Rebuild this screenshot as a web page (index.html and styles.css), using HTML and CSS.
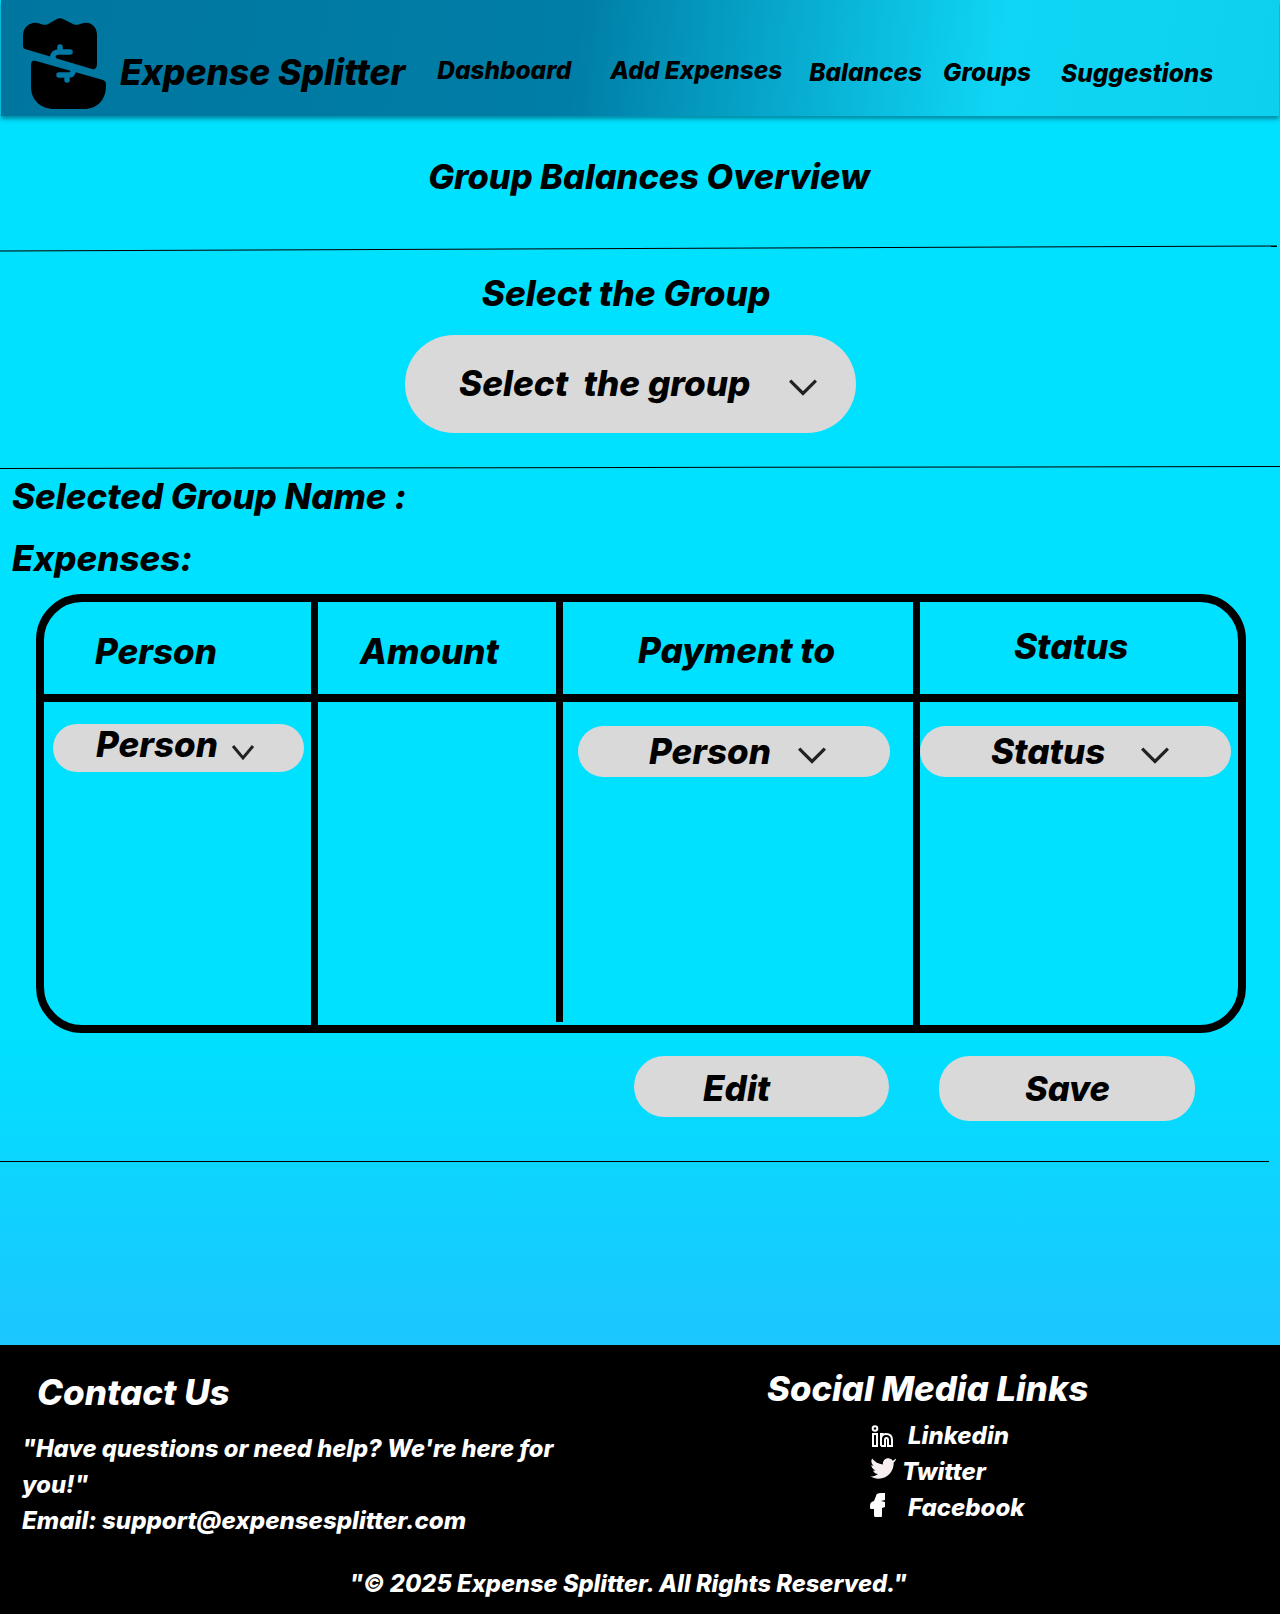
FILE: index.html
```html
<!DOCTYPE html>
<html lang="en">

<head>
    <title>Expense Splitter - Balances</title>
    <meta charset="UTF-8">
    <meta name="viewport" content="width=device-width, initial-scale=1">
    <link rel="stylesheet" href="styles.css">
</head>

<body>
    <header class="topbar">
        <svg class="logo" viewBox="0 0 110 116" aria-hidden="true">
            <path fill="#000" d="M23 36C23 27 30 22 37 23C42 24 45 26 48 24L57 19C59 18 61 18 63 19L73 24C76 26 79 24 84 23C91 22 97 27 97 35V64C97 68 95 70 92 69L25 49C24 49 23 48 23 46Z" />
            <path fill="#000" d="M31 65C31 61 33 60 36 61L103 80C105 81 106 82 106 84V86C106 100 97 109 84 109H54C41 109 31 100 31 87Z" />
            <path fill="none" stroke="#007aa4" stroke-width="5.500" stroke-linecap="round" stroke-linejoin="round" d="M60 47V52M70 52H59C54 52 51 56 54 60M71 66C75 70 73 75 69 75H59M67 75V80" />
        </svg>
        <div class="brand">Expense Splitter</div>
        <nav class="mainnav">
            <a class="navDash" href="#">Dashboard</a>
            <a class="navAdd" href="#">Add Expenses</a>
            <a class="navBal" href="#">Balances</a>
            <a class="navGrp" href="#">Groups</a>
            <a class="navSug" href="#">Suggestions</a>
        </nav>
    </header>

    <main>
        <h1 class="pageTitle">Group Balances Overview</h1>
        <hr class="rule ruleTop">

        <section class="groupPick">
            <h2>Select the Group</h2>
            <div class="pill groupSelect">
                <span>Select&nbsp; the group</span>
                <svg class="chev chevBig" viewBox="0 0 28 16"><path d="M2 2L14 14L26 2" /></svg>
            </div>
        </section>
        <hr class="rule ruleMid">

        <section class="expenses">
            <h2 class="groupName">Selected Group Name :</h2>
            <h2 class="expLabel">Expenses:</h2>

            <div class="expTable">
                <div class="head headPerson">Person</div>
                <div class="head headAmount">Amount</div>
                <div class="head headPay">Payment to</div>
                <div class="head headStatus">Status</div>

                <div class="cell cellPerson">
                    <div class="pill pillPerson">
                        <span>Person</span>
                        <svg class="chev" viewBox="0 0 24 18"><path d="M2 3L12 15L22 3" /></svg>
                    </div>
                </div>
                <div class="cell cellAmount"></div>
                <div class="cell cellPay">
                    <div class="pill pillWide">
                        <span>Person</span>
                        <svg class="chev" viewBox="0 0 28 16"><path d="M2 2L14 14L26 2" /></svg>
                    </div>
                </div>
                <div class="cell cellStatus">
                    <div class="pill pillWide pillStatus">
                        <span>Status</span>
                        <svg class="chev" viewBox="0 0 28 16"><path d="M2 2L14 14L26 2" /></svg>
                    </div>
                </div>
            </div>

            <div class="actions">
                <button class="pill btnEdit">Edit</button>
                <button class="pill btnSave">Save</button>
            </div>
        </section>
        <hr class="rule ruleEnd">
    </main>

    <footer class="pageFoot">
        <div class="footCols">
            <div class="contact">
                <h3>Contact Us</h3>
                <p>"Have questions or need help? We're here for you!"<br><span class="email">Email: support@expensesplitter.com</span></p>
            </div>
            <div class="social">
                <h3>Social Media Links</h3>
                <ul>
                    <li>
                        <svg viewBox="0 0 24 24" class="ico"><path fill="none" stroke="#fff" stroke-width="2" d="M3 10H7V22H3ZM11 22V10H13.500M11 15C11 12 13 10 16 10C20 10 22 12 22 16V22H18V16C18 14.500 17.300 14 16.300 14C15.300 14 15 14.500 15 16V22H11" /><circle cx="5" cy="4.500" r="2.300" fill="none" stroke="#fff" stroke-width="2" /></svg>
                        <span class="linkIn">Linkedin</span>
                    </li>
                    <li>
                        <svg viewBox="0 0 24 24" class="ico icoTw"><path fill="#f8f0f0" d="M23.600 3.500C22.800 4.400 21.900 4.900 20.900 5.200C20 4 18.500 3.100 16.900 3.100C13.800 3.100 11.500 5.600 11.900 8.700C8 8.500 4.400 6.500 1.900 3.300C.6 5.600 1.300 8.500 3.400 10C2.600 10 1.900 9.700 1.200 9.300C1.300 11.700 2.900 13.500 5.100 14.100C4.400 14.300 3.600 14.300 2.900 14.200C3.500 16.100 5.300 17.500 7.400 17.600C5.400 19.200 2.900 20 .4 19.700C2.500 21.100 5 21.900 7.800 21.900C17 21.900 22.200 14 21.900 7C22.800 6.100 23.500 5.200 24 4.100Z" /></svg>
                        <span class="linkTw">Twitter</span>
                    </li>
                    <li>
                        <svg viewBox="0 0 24 24" class="ico icoFb"><path fill="#fff" d="M6 3C6 1 8 0 11 0H15V7L11 8L15 9V14L12 15V23C12 24 11 24 10 24H6C5 24 4 24 4 22V16H1C0 16 0 15 0 13C0 10 1 9 4 8Z" /></svg>
                        <span class="linkFb">Facebook</span>
                    </li>
                </ul>
            </div>
        </div>
        <div class="copy">"© 2025 Expense Splitter. All Rights Reserved."</div>
    </footer>
</body>

</html>
```

FILE: styles.css
```css
* {
    box-sizing: border-box;
}

body {
    margin: 0;
    width: 1280px;
    font-family: "Inter", "Liberation Sans", sans-serif;
    font-weight: 800;
    font-style: italic;
    color: #000;
    background: linear-gradient(180deg, #00e0ff 0%, #00e0ff 77%, #1cc6ff 100%) no-repeat;
    background-size: 100% 1345px;
    background-color: #000;
}

h1,
h2,
h3,
p,
ul {
    margin: 0;
    padding: 0;
    font-weight: 800;
}

/* top bar */
.topbar {
    display: flex;
    height: 116px;
    margin-left: 1px;
    margin-right: 1px;
    background: linear-gradient(97deg, #00769f 0%, #007ea7 45%, #0fd6f5 78%, #0dd0ee 100%);
    box-shadow: 0 3px 4px rgba(0, 70, 90, 0.55);
    position: relative;
}

.logo {
    width: 110px;
    height: 116px;
    flex: none;
    margin-left: -1px;
}

.brand {
    font-size: 35.400px;
    line-height: 44px;
    margin-top: 51px;
    margin-left: 10px;
    white-space: nowrap;
}

.mainnav {
    display: flex;
    font-size: 24.400px;
    line-height: 30px;
}

.mainnav a {
    color: #000;
    text-decoration: none;
    white-space: nowrap;
}

.navDash {
    margin-left: 32px;
    margin-top: 55px;
}

.navAdd {
    margin-left: 39px;
    margin-top: 55px;
}

.navBal {
    margin-left: 27px;
    margin-top: 57px;
}

.navGrp {
    margin-left: 21px;
    margin-top: 57px;
}

.navSug {
    margin-left: 30px;
    margin-top: 58px;
}

/* main content */
main {
    height: 1229px;
    overflow: hidden;
}

.pageTitle {
    font-size: 34.400px;
    line-height: 42px;
    text-align: center;
    padding-top: 40px;
    padding-left: 18px;
    height: 129px;
}

.rule {
    display: block;
    height: 1px;
    margin: 0;
    border: 0;
    background: #000;
}

.ruleTop {
    width: 1277px;
    margin-top: 3px;
    transform: rotate(-0.22deg);
}

.ruleMid {
    width: 1280px;
    margin-top: 34px;
    transform: rotate(-0.08deg);
}

.ruleEnd {
    width: 1269px;
    margin-top: 40px;
}

.groupPick {
    text-align: center;
    padding-top: 23px;
}

.groupPick h2 {
    font-size: 35.200px;
    line-height: 42px;
    padding-right: 28px;
}

.pill {
    display: flex;
    align-items: center;
    background: #d9d9d9;
    font-family: inherit;
    font-weight: 800;
    font-style: italic;
    color: #000;
    border: 0;
}

.chev {
    flex: none;
    width: 24px;
    height: 18px;
}

.chev path {
    fill: none;
    stroke: #222;
    stroke-width: 3;
}

.chevBig {
    width: 30px;
    height: 18px;
    margin-left: 38px;
    margin-top: 7px;
}

.groupSelect {
    width: 451px;
    height: 98px;
    margin: 21px 0 0 405px;
    border-radius: 49px;
    padding-left: 54px;
    padding-bottom: 2px;
    font-size: 35.100px;
    text-align: left;
}

.expenses {
    padding-left: 12px;
}

.groupName,
.expLabel {
    font-size: 34.900px;
    line-height: 42px;
}

.groupName {
    padding-top: 7px;
}

.expLabel {
    padding-top: 20px;
}

.expTable {
    display: grid;
    grid-template-columns: 274px 245px 357px 318px;
    grid-template-rows: 100px 323px;
    width: 1210px;
    height: 439px;
    margin: 15px 0 0 24px;
    border: 8px solid #000;
    border-radius: 46px;
    overflow: hidden;
}

.head {
    font-size: 35px;
    line-height: 42px;
    border-right: 7px solid #000;
    border-bottom: 8px solid #000;
}

.headPerson {
    padding: 28px 0 0 51px;
}

.headAmount {
    padding: 28px 0 0 42px;
}

.headPay {
    padding: 27px 0 0 75px;
}

.headStatus {
    padding: 23px 0 0 94px;
    border-right: 0;
}

.cell {
    border-right: 7px solid #000;
    font-size: 35px;
}

.cellPerson {
    padding-top: 22px;
}

.cellAmount {
    margin-bottom: 3px;
}

.cellPay {
    padding-top: 24px;
}

.cellStatus {
    padding-top: 24px;
    border-right: 0;
}

.pillPerson {
    width: 251px;
    height: 48px;
    margin-left: 9px;
    border-radius: 24px;
    padding-left: 43px;
}

.pillPerson span {
    margin-top: -8px;
}

.pillPerson .chev {
    margin-left: 13px;
    margin-top: 7px;
}

.pillWide {
    width: 312px;
    height: 51px;
    margin-left: 15px;
    border-radius: 26px;
    padding-left: 71px;
}

.pillWide span {
    margin-top: -2px;
}

.pillWide .chev {
    width: 30px;
    margin-left: 26px;
    margin-top: 7px;
}

.pillStatus {
    margin-left: 0;
    width: 311px;
}

.pillStatus .chev {
    margin-left: 35px;
}

.actions {
    display: flex;
    margin-top: 23px;
    margin-left: 622px;
    align-items: flex-start;
}

.btnEdit,
.btnSave {
    font-size: 35px;
    border-radius: 31px;
    padding: 0 0 0 69px;
}

.btnEdit {
    width: 255px;
    height: 61px;
    padding-top: 2px;
}

.btnSave {
    width: 256px;
    height: 65px;
    margin-left: 50px;
    padding-left: 86px;
    font-size: 34.400px;
}

/* footer */
.pageFoot {
    height: 269px;
    background: #000;
    color: #fff;
    padding: 26px 0 0;
    position: relative;
}

.footCols {
    display: flex;
}

.contact {
    width: 767px;
    padding-left: 22px;
}

.contact h3 {
    font-size: 35px;
    line-height: 42px;
    margin-left: 15px;
}

.contact p {
    width: 560px;
    font-size: 23.700px;
    line-height: 36px;
    margin-top: 18px;
}

.email {
    font-size: 24.100px;
}

.social h3 {
    font-size: 34.700px;
    line-height: 42px;
    margin-top: -4px;
}

.social ul {
    list-style: none;
    margin-left: 103px;
    margin-top: 9px;
    font-size: 24px;
    line-height: 36px;
}

.social li {
    display: flex;
    align-items: center;
    height: 36px;
}

.ico {
    width: 24px;
    height: 24px;
    flex: none;
}

.icoTw {
    width: 26px;
    height: 26px;
    margin-top: -8px;
}

.icoFb {
    margin-top: -7px;
}

.linkIn,
.linkFb {
    margin-left: 14px;
}

.linkTw {
    margin-left: 6px;
}

.copy {
    text-align: center;
    font-size: 23.700px;
    line-height: 30px;
    margin-top: 30px;
    padding-right: 24px;
}
```
